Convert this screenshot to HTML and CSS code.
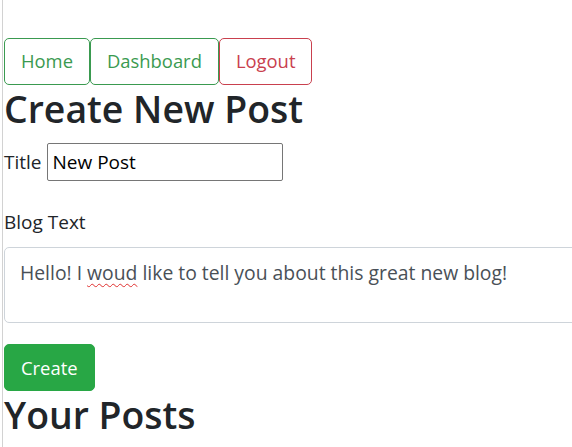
FILE: index.html
```html
<!DOCTYPE html>
<html lang="en">
<head>
<meta charset="utf-8">
<title>Create New Post</title>
<link rel="stylesheet" href="styles.css">
</head>
<body>
<div class="page">
  <nav class="nav">
    <a class="btn btn-outline-success" href="#">Home</a>
    <a class="btn btn-outline-success" href="#">Dashboard</a>
    <a class="btn btn-outline-danger" href="#">Logout</a>
  </nav>
  <h1 class="heading">Create New Post</h1>
  <form class="post-form">
    <div class="field-row">
      <label class="label" for="title">Title</label>
      <input class="text-input" id="title" type="text" value="New Post">
    </div>
    <label class="label block-label">Blog Text</label>
    <div class="textbox" role="textbox" aria-multiline="true">Hello! I <span class="misspelled">woud</span> like to tell you about this great new blog!</div>
    <button class="btn btn-success" type="button">Create</button>
  </form>
  <h2 class="heading">Your Posts</h2>
</div>
</body>
</html>
```
FILE: styles.css
```css
html, body {
  margin: 0;
  padding: 0;
  background: #fff;
  overflow: hidden;
}

body {
  font-family: "Open Sans", "Noto Sans", sans-serif;
  font-size: 19px;
  line-height: 1.5;
  color: #212529;
}

.page {
  margin-left: 2px;
  border-left: 1px solid #d2d2d2;
  padding-left: 1px;
  padding-top: 38px;
  min-height: 447px;
  box-sizing: border-box;
}

.nav {
  display: flex;
}

.btn {
  display: inline-block;
  font-family: inherit;
  font-size: 18.4px;
  line-height: 28.5px;
  padding: 8px 16px;
  border: 1px solid transparent;
  border-radius: 5px;
  text-decoration: none;
  background: transparent;
  cursor: pointer;
}

.btn-outline-success {
  color: #3a9a50;
  border-color: #3a9a50;
}

.btn-outline-danger {
  color: #c9404e;
  border-color: #c9404e;
}

.btn-success {
  color: #fff;
  background: #28a745;
  border-color: #28a745;
  margin-top: 21px;
  line-height: 29px;
}

.heading {
  font-size: 37.4px;
  font-weight: 600;
  line-height: 48px;
  margin: 0;
}

.post-form {
  margin-top: 10.5px;
}

.field-row {
  display: flex;
  align-items: center;
  gap: 5px;
}

.label {
  font-size: 19px;
}

.text-input {
  width: 236px;
  height: 38px;
  box-sizing: border-box;
  border: 1px solid #767676;
  border-radius: 2px;
  padding: 0 5px;
  font-family: inherit;
  font-size: 19px;
  color: #000;
}

.block-label {
  display: block;
  margin-top: 27px;
}

.textbox {
  margin-top: 10px;
  width: 620px;
  height: 76px;
  box-sizing: border-box;
  border: 1px solid #ced4da;
  border-radius: 5px;
  padding: 11px 15px 9px;
  color: #495057;
  font-size: 19.35px;
  line-height: 28px;
}

.misspelled {
  text-decoration: underline wavy #e0302f;
  text-decoration-thickness: 1px;
  text-underline-offset: 3px;
}
```
